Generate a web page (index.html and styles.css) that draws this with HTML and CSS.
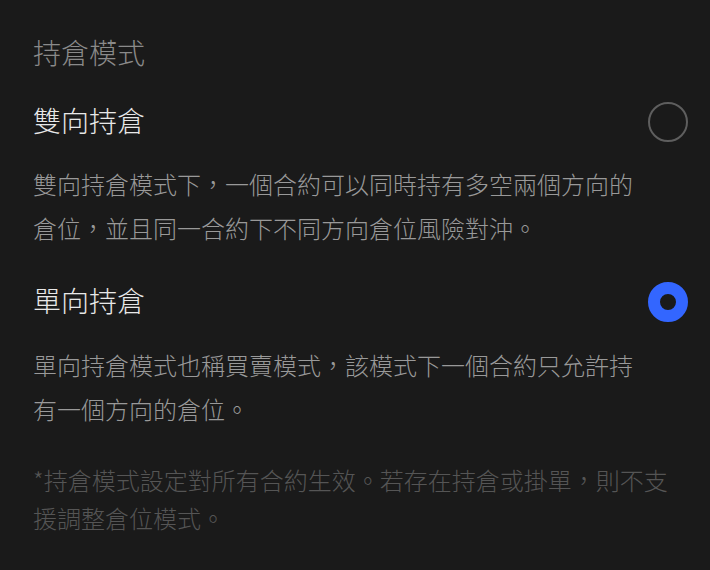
FILE: index.html
```html
<!DOCTYPE html>
<html lang="zh-Hant">
<head>
<meta charset="utf-8">
<title>持倉模式</title>
<link rel="stylesheet" href="styles.css">
</head>
<body>
<div class="page">
  <div class="title">持倉模式</div>
  <div class="option">
    <div class="option-head">
      <div class="option-name">雙向持倉</div>
      <div class="radio"></div>
    </div>
    <div class="desc">雙向持倉模式下，一個合約可以同時持有多空兩個方向的倉位，並且同一合約下不同方向倉位風險對沖。</div>
  </div>
  <div class="option">
    <div class="option-head">
      <div class="option-name">單向持倉</div>
      <div class="radio checked"></div>
    </div>
    <div class="desc">單向持倉模式也稱買賣模式，該模式下一個合約只允許持有一個方向的倉位。</div>
  </div>
  <div class="note">*持倉模式設定對所有合約生效。若存在持倉或掛單，則不支援調整倉位模式。</div>
</div>
</body>
</html>
```
FILE: styles.css
```css
html, body {
  margin: 0;
  padding: 0;
  background: #1a1a1a;
}
body {
  font-family: "Noto Sans CJK TC", "Noto Sans CJK SC", "Noto Sans", sans-serif;
  font-weight: 300;
  width: 710px;
  height: 570px;
  overflow: hidden;
}
.page {
  padding: 32px 22px 0 33px;
  display: flex;
  flex-direction: column;
}
.title {
  font-size: 28px;
  line-height: 40px;
  color: #8a8a8a;
}
.option {
  display: flex;
  flex-direction: column;
  margin-top: 29px;
}
.option + .option {
  margin-top: 31px;
}
.option-head {
  display: flex;
  align-items: center;
  justify-content: space-between;
  height: 40px;
}
.option-name {
  font-size: 28px;
  line-height: 40px;
  color: #e8e8e8;
  margin-top: -3px;
}
.radio {
  width: 40px;
  height: 40px;
  box-sizing: border-box;
  border: 2px solid #5e5e5e;
  border-radius: 50%;
  margin-top: 2px;
}
.radio.checked {
  border: 12px solid #3366ff;
  background: #1a1a1a;
}
.desc {
  margin-top: 21px;
  max-width: 612px;
  font-size: 24px;
  line-height: 44px;
  color: #999999;
}
.option + .option .desc {
  margin-top: 22px;
}
.note {
  margin-top: 30px;
  font-size: 24px;
  line-height: 38px;
  color: #555555;
}
```
